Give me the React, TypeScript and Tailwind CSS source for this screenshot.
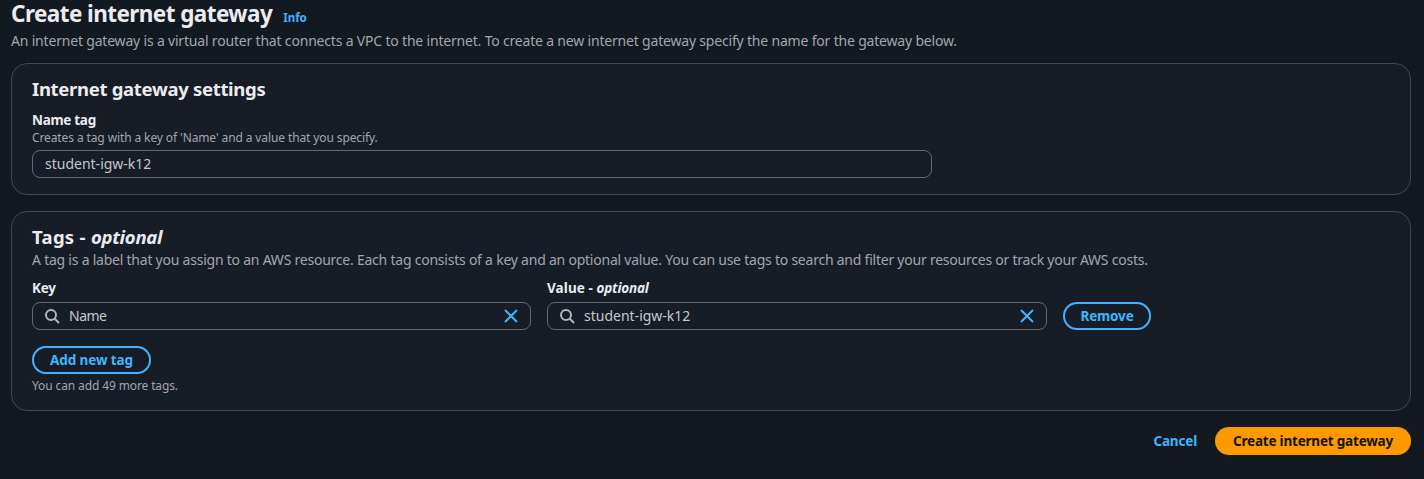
import type { ReactNode } from 'react';

function SearchIcon() {
  return (
    <svg className="h-4 w-4 shrink-0" viewBox="0 0 16 16" fill="none" stroke="#b4b4bb" strokeWidth="2">
      <circle cx="7" cy="7" r="5" />
      <path d="m15 15-4.5-4.5" />
    </svg>
  );
}

function CloseIcon() {
  return (
    <svg className="h-4 w-4 shrink-0" viewBox="0 0 16 16" fill="none" stroke="#42b4ff" strokeWidth="2">
      <path d="m2 2 12 12M14 2 2 14" />
    </svg>
  );
}

function Card({ className, children }: { className: string; children: ReactNode }) {
  return (
    <section className={`rounded-2xl border border-[#424650] bg-[#171d26] px-5 pt-[13px] ${className}`}>
      {children}
    </section>
  );
}

function SearchField({ className, children }: { className: string; children: ReactNode }) {
  return (
    <div className={`mt-1 flex h-7 items-center rounded-lg border border-[#656871] pr-[11px] pl-[11px] text-sm text-[#c6c6cd] ${className}`}>
      <SearchIcon />
      <span className="ml-[9px] flex-1">{children}</span>
      <CloseIcon />
    </div>
  );
}

const outlineButton =
  'flex h-7 items-center justify-center rounded-full border-2 border-[#42b4ff] text-[13.5px] font-bold text-[#42b4ff]';

export default function App() {
  return (
    <main className="h-[479px] bg-[#131920] pr-[13px] pl-[11px] font-['Noto_Sans',sans-serif] text-[#ebebf0]">
      <header className="h-[63px]">
        <div className="flex h-[27px] items-baseline">
          <h1 className="text-[22.5px] leading-[27px] font-bold tracking-[-0.57px] whitespace-nowrap">Create internet gateway</h1>
          <a className="ml-[11px] text-[11.5px] font-bold text-[#42b4ff]">Info</a>
        </div>
        <p className="mt-1 text-sm leading-5 tracking-[-0.187px] whitespace-nowrap text-[#a4a4ad]">
          An internet gateway is a virtual router that connects a VPC to the internet. To create a new internet gateway specify the name for the gateway below.
        </p>
      </header>

      <Card className="h-[132px]">
        <h2 className="text-[18.5px] leading-6 font-bold tracking-[-0.31px]">Internet gateway settings</h2>
        <label className="mt-[9px] block text-[13.5px] leading-5 font-bold tracking-[-0.3px]">Name tag</label>
        <p className="text-xs leading-4 tracking-[-0.11px] text-[#a4a4ad]">
          Creates a tag with a key of 'Name' and a value that you specify.
        </p>
        <div className="mt-1 flex h-7 w-[900px] items-center rounded-lg border border-[#656871] px-3 text-sm text-[#c6c6cd]">
          student-igw-k12
        </div>
      </Card>

      <Card className="mt-4 h-[200px]">
        <h2 className="text-[18.5px] leading-6 font-bold whitespace-pre">
          <span className="tracking-[0.3px]">Tags - </span>
          <i className="tracking-[-0.25px]">optional</i>
        </h2>
        <p className="mt-px text-sm leading-5 tracking-[-0.23px] whitespace-nowrap text-[#a4a4ad]">
          A tag is a label that you assign to an AWS resource. Each tag consists of a key and an optional value. You can use tags to search and filter your resources or track your AWS costs.
        </p>
        <div className="mt-2 flex items-end">
          <div>
            <label className="block text-[13.5px] leading-5 font-bold tracking-[-0.2px]">Key</label>
            <SearchField className="w-[499px] tracking-[-0.5px]">Name</SearchField>
          </div>
          <div className="ml-4">
            <label className="block text-[13.5px] leading-5 font-bold whitespace-pre">
              <span className="tracking-[0.1px]">Value - </span>
              <i className="tracking-[-0.2px]">optional</i>
            </label>
            <SearchField className="w-[500px]">student-igw-k12</SearchField>
          </div>
          <button className={`ml-4 w-[88px] tracking-[-0.15px] ${outlineButton}`}>Remove</button>
        </div>
        <button className={`mt-4 w-[119px] tracking-[-0.1px] ${outlineButton}`}>Add new tag</button>
        <p className="mt-1 text-xs leading-4 tracking-[-0.12px] text-[#a4a4ad]">You can add 49 more tags.</p>
      </Card>

      <footer className="mt-4 flex items-center justify-end text-[13.5px] font-bold">
        <button className="mr-[18px] tracking-[-0.17px] text-[#42b4ff]">Cancel</button>
        <button className="h-7 w-[196px] rounded-full bg-[#ff9900] tracking-[-0.2px] text-[#0f141a]">Create internet gateway</button>
      </footer>
    </main>
  );
}
